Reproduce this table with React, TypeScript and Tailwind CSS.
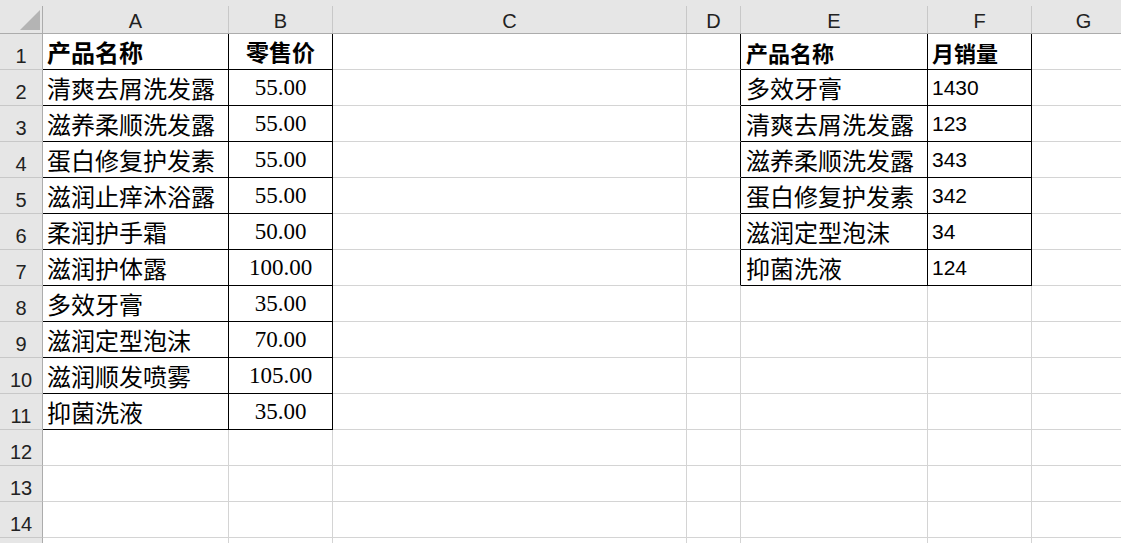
import React from 'react';

const gridCols = 'grid grid-cols-[43px_186px_104px_354px_54px_187px_104px_104px]';

const colLetters = ['A', 'B', 'C', 'D', 'E', 'F', 'G'];

const cjk = "font-['Noto_Sans_CJK_SC',sans-serif]";

const productA = [
  '清爽去屑洗发露',
  '滋养柔顺洗发露',
  '蛋白修复护发素',
  '滋润止痒沐浴露',
  '柔润护手霜',
  '滋润护体露',
  '多效牙膏',
  '滋润定型泡沫',
  '滋润顺发喷雾',
  '抑菌洗液',
];
const priceB = ['55.00', '55.00', '55.00', '55.00', '50.00', '100.00', '35.00', '70.00', '105.00', '35.00'];

const productE = ['多效牙膏', '清爽去屑洗发露', '滋养柔顺洗发露', '蛋白修复护发素', '滋润定型泡沫', '抑菌洗液'];
const salesF = ['1430', '123', '343', '342', '34', '124'];

const ColumnHeader: React.FC = () => (
  <div className={`${gridCols} h-[34px] pt-[6px] bg-[#e6e6e6] border-b border-[#acacac]`}>
    {/* corner select-all */}
    <div className="flex items-end justify-end pr-[2px] pb-[3px] border-r border-[#acacac]">
      <svg width="20" height="20" viewBox="0 0 20 20">
        <polygon points="20,0 20,20 0,20" fill="#b4b4b4" />
      </svg>
    </div>
    {colLetters.map((l) => (
      <div
        key={l}
        className="flex items-end justify-center pb-[2px] border-r border-[#c8c8c8] text-[20px] leading-[20px] text-[#222] font-['Liberation_Sans',sans-serif]"
      >
        {l}
      </div>
    ))}
  </div>
);

const DataRow: React.FC<{ r: number }> = ({ r }) => {
  const inLeft = r <= 11;
  const inRight = r <= 7;
  const grid = 'border-[#d4d4d4]';
  const black = 'border-black';

  const a = r === 1 ? '产品名称' : productA[r - 2];
  const b = r === 1 ? '零售价' : priceB[r - 2];
  const e = r === 1 ? '产品名称' : productE[r - 2];
  const f = r === 1 ? '月销量' : salesF[r - 2];

  return (
    <div className={`${gridCols} h-[36px]`}>
      <div className="flex items-end justify-center pb-[3px] bg-[#e6e6e6] border-r border-b border-r-[#acacac] border-b-[#c8c8c8] text-[20px] leading-[20px] text-[#222] font-['Liberation_Sans',sans-serif]">
        {r}
      </div>

      {/* A */}
      <div className={`flex items-center pl-[4px] border-r border-b ${inLeft ? black : grid} whitespace-nowrap`}>
        {inLeft &&
          (r === 1 ? (
            <span className={`${cjk} font-bold text-[24px] leading-[24px] text-black`}>{a}</span>
          ) : (
            <span className={`${cjk} text-[24px] leading-[24px] pt-[1px] text-black`}>{a}</span>
          ))}
      </div>

      {/* B */}
      <div className={`flex items-center justify-center border-r border-b ${inLeft ? black : grid}`}>
        {inLeft &&
          (r === 1 ? (
            <span className={`${cjk} font-bold text-[23px] leading-[23px] text-black`}>{b}</span>
          ) : (
            <span className="font-['Liberation_Serif',serif] text-[23px] leading-[23px] text-black">{b}</span>
          ))}
      </div>

      {/* C */}
      <div className={`border-r border-b ${grid}`} />

      {/* D */}
      <div className={`border-r border-b ${grid} ${inRight ? 'border-r-black' : ''}`} />

      {/* E */}
      <div className={`flex items-center pl-[5px] border-r border-b ${inRight ? black : grid} whitespace-nowrap`}>
        {inRight &&
          (r === 1 ? (
            <span className={`${cjk} font-bold text-[22px] leading-[22px] text-black`}>{e}</span>
          ) : (
            <span className={`${cjk} text-[24px] leading-[24px] pt-[1px] text-black`}>{e}</span>
          ))}
      </div>

      {/* F */}
      <div className={`flex items-center pl-[4px] border-r border-b ${inRight ? black : grid}`}>
        {inRight &&
          (r === 1 ? (
            <span className={`${cjk} font-bold text-[22px] leading-[22px] text-black`}>{f}</span>
          ) : (
            <span className="font-['Liberation_Sans',sans-serif] text-[21px] leading-[21px] text-black">{f}</span>
          ))}
      </div>

      {/* G */}
      <div className={`border-r border-b ${grid}`} />
    </div>
  );
};

const App: React.FC = () => {
  const rows = Array.from({ length: 15 }, (_, i) => i + 1);
  return (
    <div className="w-[1121px] h-[543px] overflow-hidden bg-white">
      <ColumnHeader />
      {rows.map((r) => (
        <DataRow key={r} r={r} />
      ))}
    </div>
  );
};

export default App;
